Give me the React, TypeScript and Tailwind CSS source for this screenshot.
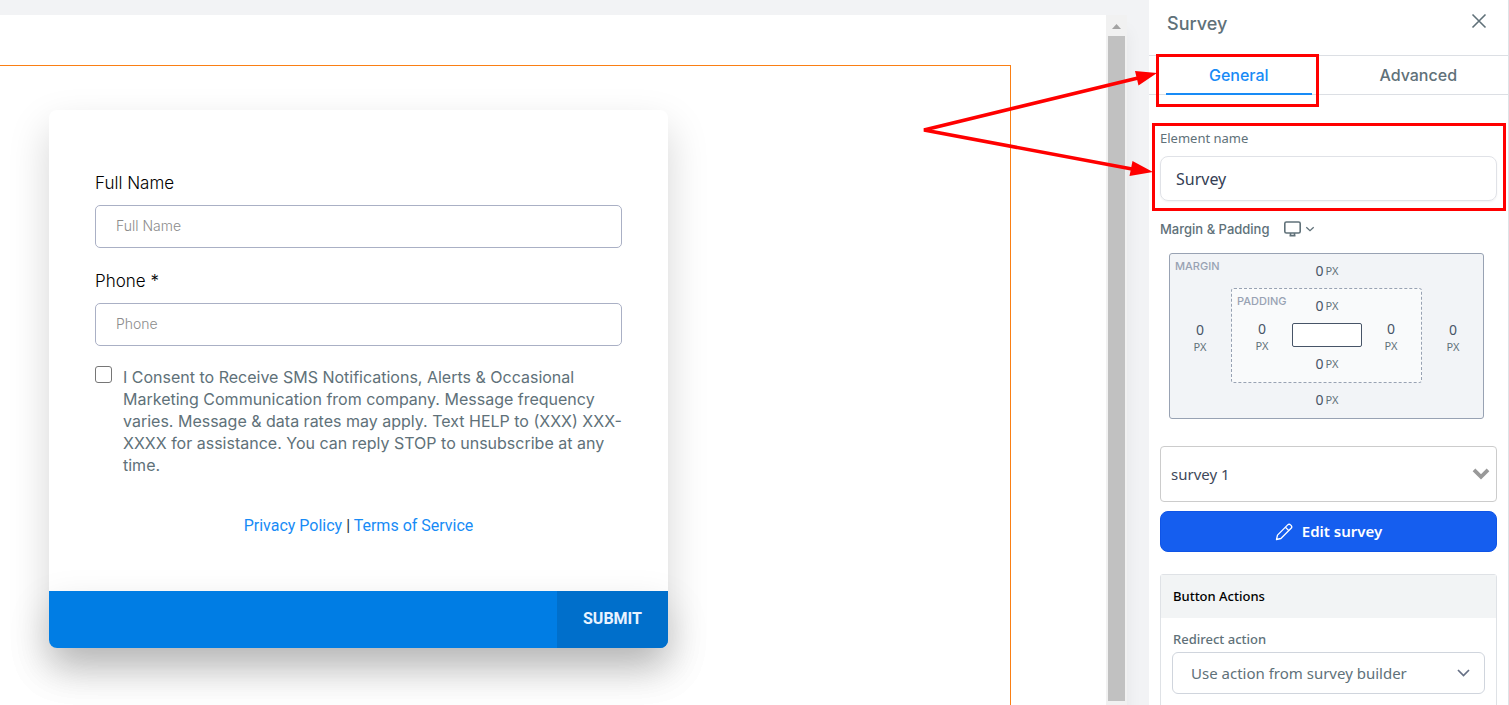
import { useState } from 'react';
import type { ReactNode } from 'react';

interface FormField {
  id: string;
  label: string;
  placeholder: string;
}

const fields: FormField[] = [
  { id: 'full-name', label: 'Full Name', placeholder: 'Full Name' },
  { id: 'phone', label: 'Phone *', placeholder: 'Phone' },
];

function SpacingValue({ label, stacked = false }: { label: string; stacked?: boolean }) {
  return (
    <label className={stacked ? 'flex w-5 flex-col items-center pt-1' : 'flex items-center justify-center gap-px'}>
      <input
        type="text"
        aria-label={label}
        defaultValue="0"
        className="w-[10px] bg-transparent text-center text-[14px] leading-[18px] text-[#475467] outline-none"
      />
      <span className="text-[11px] leading-4 text-[#607179]">PX</span>
    </label>
  );
}

function SpacingEditor() {
  return (
    <div className="relative mx-[9px] mr-[13px] flex h-[166px] flex-col justify-between rounded-[3px] border border-[#98a2b3] bg-[#f2f4f7] pt-2 pb-[9px]">
      <span className="absolute top-1 left-[5px] font-['Inter'] text-[11px] leading-4 font-medium text-[#98a2b3]">MARGIN</span>
      <SpacingValue label="Margin top" />
      <div className="flex items-center justify-between px-5">
        <SpacingValue label="Margin left" stacked />
        <div className="relative flex h-[95px] w-[191px] flex-col justify-between rounded-[3px] border border-dashed border-[#98a2b3] bg-[#f9fafb] pt-2 pb-[9px]">
          <span className="absolute top-1 left-[5px] font-['Inter'] text-[11px] leading-4 font-medium text-[#98a2b3]">PADDING</span>
          <SpacingValue label="Padding top" />
          <div className="flex items-center justify-between px-5">
            <SpacingValue label="Padding left" stacked />
            <div className="h-6 w-[70px] rounded-[2px] border border-[#475467] bg-white" />
            <SpacingValue label="Padding right" stacked />
          </div>
          <SpacingValue label="Padding bottom" />
        </div>
        <SpacingValue label="Margin right" stacked />
      </div>
      <SpacingValue label="Margin bottom" />
    </div>
  );
}

function SurveyForm() {
  return (
    <form
      className="mt-[44px] ml-[49px] max-w-[619px] rounded-lg bg-white shadow-[0_18px_40px_rgba(0,0,0,0.17)]"
      onSubmit={(e) => e.preventDefault()}
    >
      <div className="px-[46px] pt-[61px] pb-[53px] font-['Inter']">
        <div className="flex flex-col gap-[21px]">
          {fields.map((field) => (
            <div key={field.id}>
              <label htmlFor={field.id} className="mb-[10px] block text-[17px] leading-6 font-light text-black">
                {field.label}
              </label>
              <input
                id={field.id}
                type="text"
                placeholder={field.placeholder}
                className="block h-[43px] w-full rounded-[5px] border border-[#aab0c5] bg-white px-5 pb-[2px] text-[14px] font-light placeholder:text-[#8c8c8c]"
              />
            </div>
          ))}
        </div>
        <div className="mt-5 flex items-start gap-[11px]">
          <input
            id="consent"
            type="checkbox"
            className="h-[17px] w-[17px] shrink-0 appearance-none rounded-[3px] border border-[#767676] bg-white checked:bg-[#0075ff]"
          />
          <label htmlFor="consent" className="text-[16px] leading-[22px] text-[#607179]">
            I Consent to Receive SMS Notifications, Alerts &amp; Occasional Marketing Communication from company. Message
            frequency varies. Message &amp; data rates may apply. Text HELP to (XXX) XXX-XXXX for assistance. You can reply
            STOP to unsubscribe at any time.
          </label>
        </div>
        <p className="mt-[38px] text-center font-['Roboto'] text-[16px] leading-6 text-[#2c3345]">
          <a href="#privacy" className="text-[#188bf6]">Privacy Policy</a> |{' '}
          <a href="#terms" className="text-[#188bf6]">Terms of Service</a>
        </p>
      </div>
      <div className="flex h-[57px] justify-end overflow-visible rounded-b-lg bg-[#007de4] shadow-[0_18px_40px_rgba(0,0,0,0.17)]">
        <button type="submit" className="w-[111px] rounded-br-lg bg-[#006fcb] pb-[2px] font-['Roboto'] text-[16px] font-bold text-[#e8f3ff]">
          SUBMIT
        </button>
      </div>
    </form>
  );
}

function Tab({ active, onClick, children }: { active: boolean; onClick: () => void; children: ReactNode }) {
  return (
    <button
      type="button"
      role="tab"
      aria-selected={active}
      onClick={onClick}
      className={`flex-1 px-[17px] font-['Inter'] text-[16px] font-medium ${active ? 'text-[#188bf6]' : 'text-[#607179]'}`}
    >
      <span className={`block border-b-2 pt-px leading-9 ${active ? 'border-[#188bf6]' : 'border-transparent'}`}>{children}</span>
    </button>
  );
}

function SettingsPanel() {
  const [tab, setTab] = useState('general');

  return (
    <aside className="relative w-[360px] shrink-0 overflow-hidden border-r border-[#dee2e6] bg-white font-['Noto_Sans',sans-serif]">
      <header className="flex h-[55px] items-center justify-between pr-[20px] pb-2 pl-[18px]">
        <h2 className="font-['Inter'] text-[18px] font-medium text-[#607179]">Survey</h2>
        <button type="button" aria-label="Close" className="mt-3 self-start">
          <svg width="18" height="18" viewBox="0 0 18 18" fill="none" stroke="#607179" strokeWidth="1.6">
            <path d="M2.5 2.5l13 13M15.500 2.500l-13 13" />
          </svg>
        </button>
      </header>
      <div role="tablist" className="flex h-10 border-y border-[#dcdfe4]">
        <Tab active={tab === 'general'} onClick={() => setTab('general')}>General</Tab>
        <Tab active={tab === 'advanced'} onClick={() => setTab('advanced')}>Advanced</Tab>
      </div>

      <div className="px-[11px] pt-[33px]">
        <label htmlFor="element-name" className="block text-[13px] leading-5 text-[#607179]">Element name</label>
        <input
          id="element-name"
          type="text"
          defaultValue="Survey"
          className="mt-2 block h-[45px] w-full rounded-lg border border-[#e0e2e7] px-[15px] text-[16px] text-[#344054] shadow-xs"
        />

        <div className="mt-[18px] mb-[14px] flex items-center text-[#607179]">
          <span className="font-['Inter'] text-[13px] leading-5 font-medium">Margin &amp; Padding</span>
          <button type="button" aria-label="Choose device" className="ml-[14px] flex items-center gap-1">
            <svg width="17" height="16" viewBox="0 0 17 16" fill="none" stroke="currentColor" strokeWidth="1.6">
              <rect x="0.8" y="1" width="15.4" height="11" rx="1.600" />
              <path d="M6.500 12v2.500M10.500 12v2.500M5.500 14.600h6" />
            </svg>
            <svg width="10" height="8" viewBox="0 0 10 8" fill="none" stroke="currentColor" strokeWidth="1.300">
              <path d="M1.300 2.200L5 5.700l3.700-3.500" />
            </svg>
          </button>
        </div>

        <SpacingEditor />

        <div className="relative mt-[27px]">
          <select aria-label="Survey" className="block h-14 w-full appearance-none rounded-[4px] border border-[#ccc] bg-white px-[10px] text-[15px] text-[#40485a]">
            <option>survey 1</option>
          </select>
          <svg className="pointer-events-none absolute top-[21px] right-[7px]" width="18" height="14" viewBox="0 0 18 14" fill="none" stroke="#999" strokeWidth="3.800">
            <path d="M2 2.800l7 7 7-7" />
          </svg>
        </div>

        <button type="button" className="mt-[9px] flex h-[41px] w-full items-center justify-center gap-[9px] rounded-lg border border-[#0f54e6] bg-[#155eef] text-[15px] font-semibold text-white">
          <svg width="18" height="18" viewBox="0 0 18 18" fill="none" stroke="currentColor" strokeWidth="1.300" strokeLinejoin="round">
            <path d="M1.500 16.500l1-4.400L12.700 1.900a2 2 0 0 1 2.800 0l.6.600a2 2 0 0 1 0 2.800L5.900 15.500z" />
            <path d="M10.400 4.200l3.400 3.400" />
          </svg>
          Edit survey
        </button>

        <section className="mt-[22px] rounded-[3px] border border-[#dfe2e6]">
          <h3 className="bg-[#f2f4f5] px-3 py-3 text-[13px] leading-[19px] font-medium text-black">Button Actions</h3>
          <div className="px-[11px] pt-[11px] pb-10">
            <label htmlFor="redirect-action" className="block px-px text-[13px] leading-5 font-medium text-[#607179]">Redirect action</label>
            <div className="relative mt-[3px]">
              <select id="redirect-action" className="block h-[42px] w-full appearance-none rounded-md border border-[#d0d5dd] bg-white px-[18px] text-[15px] text-[#607179]">
                <option>Use action from survey builder</option>
              </select>
              <svg className="pointer-events-none absolute top-4 right-[15px]" width="13" height="10" viewBox="0 0 13 10" fill="none" stroke="#667085" strokeWidth="1.700">
                <path d="M1 2l5.500 5.500L12 2" />
              </svg>
            </div>
          </div>
        </section>
      </div>
    </aside>
  );
}

// Red boxes and arrows pointing at the General tab and the name input
function Callouts() {
  return (
    <svg className="pointer-events-none absolute top-0 right-0" width="600" height="220" viewBox="909 0 600 220" fill="none" stroke="#f00">
      <rect x="1157.500" y="55.500" width="160" height="50" strokeWidth="3" />
      <rect x="1153.500" y="124.500" width="351" height="85" strokeWidth="3" />
      <path d="M1138 78L924 130l208 39" strokeWidth="3.600" />
      <path d="M1157 73l-22-2 3.500 14.500zM1153 172l-20.500-11-3 15z" fill="#f00" stroke="none" />
    </svg>
  );
}

export default function App() {
  return (
    <div className="relative flex h-screen overflow-hidden bg-[#f2f3f5]">
      <main className="flex min-w-0 flex-1 pt-[15px] pr-[22px]">
        <div className="flex min-w-0 flex-1 bg-white shadow-[0_16px_16px_rgba(16,24,40,0.06)]">
          <div className="mt-[50px] mr-[95px] min-w-0 flex-1 border-t border-r border-[#fa7f14]">
            <SurveyForm />
          </div>
          <div className="flex w-[21px] shrink-0 flex-col items-center bg-[#f1f1f1] pb-1">
            <svg width="9" height="21" viewBox="0 0 9 21" fill="#a3a3a3" className="shrink-0">
              <path d="M0 14l4.500-5L9 14z" />
            </svg>
            <div className="w-[17px] flex-1 bg-[#c1c1c1]" />
          </div>
        </div>
      </main>
      <SettingsPanel />
      <Callouts />
    </div>
  );
}
